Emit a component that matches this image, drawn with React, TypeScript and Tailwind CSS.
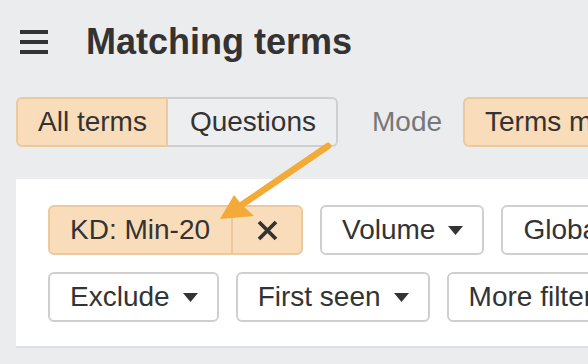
import React from "react";

const font = { fontFamily: '"Liberation Sans", Arial, sans-serif' };

function Caret() {
  return (
    <svg width="15" height="9" viewBox="0 0 15 9" className="shrink-0">
      <path d="M0 0 H15 L7.5 9 Z" fill="#333" />
    </svg>
  );
}

function FilterButton({ label }: { label: string }) {
  return (
    <div className="flex h-[50px] shrink-0 items-center gap-[13px] rounded-[6px] border-2 border-[#cfcfcf] bg-white pl-5 pr-[19px] leading-none">
      <span>{label}</span>
      <Caret />
    </div>
  );
}

function Hamburger() {
  return (
    <div className="flex w-[28px] flex-col gap-[6px]">
      <div className="h-[4px] bg-[#333]" />
      <div className="h-[4px] bg-[#333]" />
      <div className="h-[4px] bg-[#333]" />
    </div>
  );
}

export default function App() {
  return (
    <div
      className="relative h-[364px] w-[588px] overflow-hidden bg-[#ebecee] text-[28px] text-[#333]"
      style={font}
    >
      {/* Header */}
      <div className="flex h-[84px] items-center pl-5">
        <Hamburger />
        <h1 className="ml-[38px] whitespace-nowrap text-[36px] font-bold leading-none">
          Matching terms
        </h1>
      </div>

      {/* Mode row */}
      <div className="mt-[13px] flex items-center whitespace-nowrap pl-4">
        <div className="flex h-[50px] shrink-0 leading-none">
          <div className="flex items-center rounded-l-[6px] border-2 border-[#ebc9a0] bg-[#f9dcb9] pl-[20px] pr-[19px]">
            All terms
          </div>
          <div className="flex items-center rounded-r-[6px] border-2 border-l-0 border-[#cfcfcf] bg-[#edeef0] pl-[22px] pr-[20px]">
            Questions
          </div>
        </div>
        <span className="ml-[34px] shrink-0 leading-none text-[#777]">Mode</span>
        <div className="ml-[21px] flex h-[50px] shrink-0 items-center rounded-[6px] border-2 border-[#ebc9a0] bg-[#f9dcb9] px-5 leading-none">
          Terms match
        </div>
      </div>

      {/* Filters panel */}
      <div className="ml-4 mt-[32px] h-[169px] border-b-2 border-[#dedfe1] bg-white pl-8 pt-[26px]">
        <div className="flex gap-[17px] whitespace-nowrap">
          <div className="flex h-[50px] shrink-0 rounded-[6px] border-2 border-[#ebc9a0] bg-[#f9dcb9] leading-none">
            <div className="flex items-center border-r-2 border-[#ebc9a0] pl-5 pr-[21px]">
              KD: Min-20
            </div>
            <div className="flex w-[68px] items-center justify-center">
              <svg width="21" height="21" viewBox="0 0 21 21">
                <path d="M2 2 L19 19 M19 2 L2 19" stroke="#333" strokeWidth="3.8" />
              </svg>
            </div>
          </div>
          <FilterButton label="Volume" />
          <FilterButton label="Global volume" />
        </div>
        <div className="mt-[17px] flex gap-[17px] whitespace-nowrap">
          <FilterButton label="Exclude" />
          <FilterButton label="First seen" />
          <FilterButton label="More filters" />
        </div>
      </div>

      {/* Annotation arrow */}
      <svg className="pointer-events-none absolute left-0 top-0" width="588" height="364">
        <line x1="328" y1="146" x2="240" y2="206" stroke="#f3aa38" strokeWidth="6.5" strokeLinecap="round" />
        <polygon points="220,219 234,195 242,205 254,216" fill="#f3aa38" />
      </svg>
    </div>
  );
}
